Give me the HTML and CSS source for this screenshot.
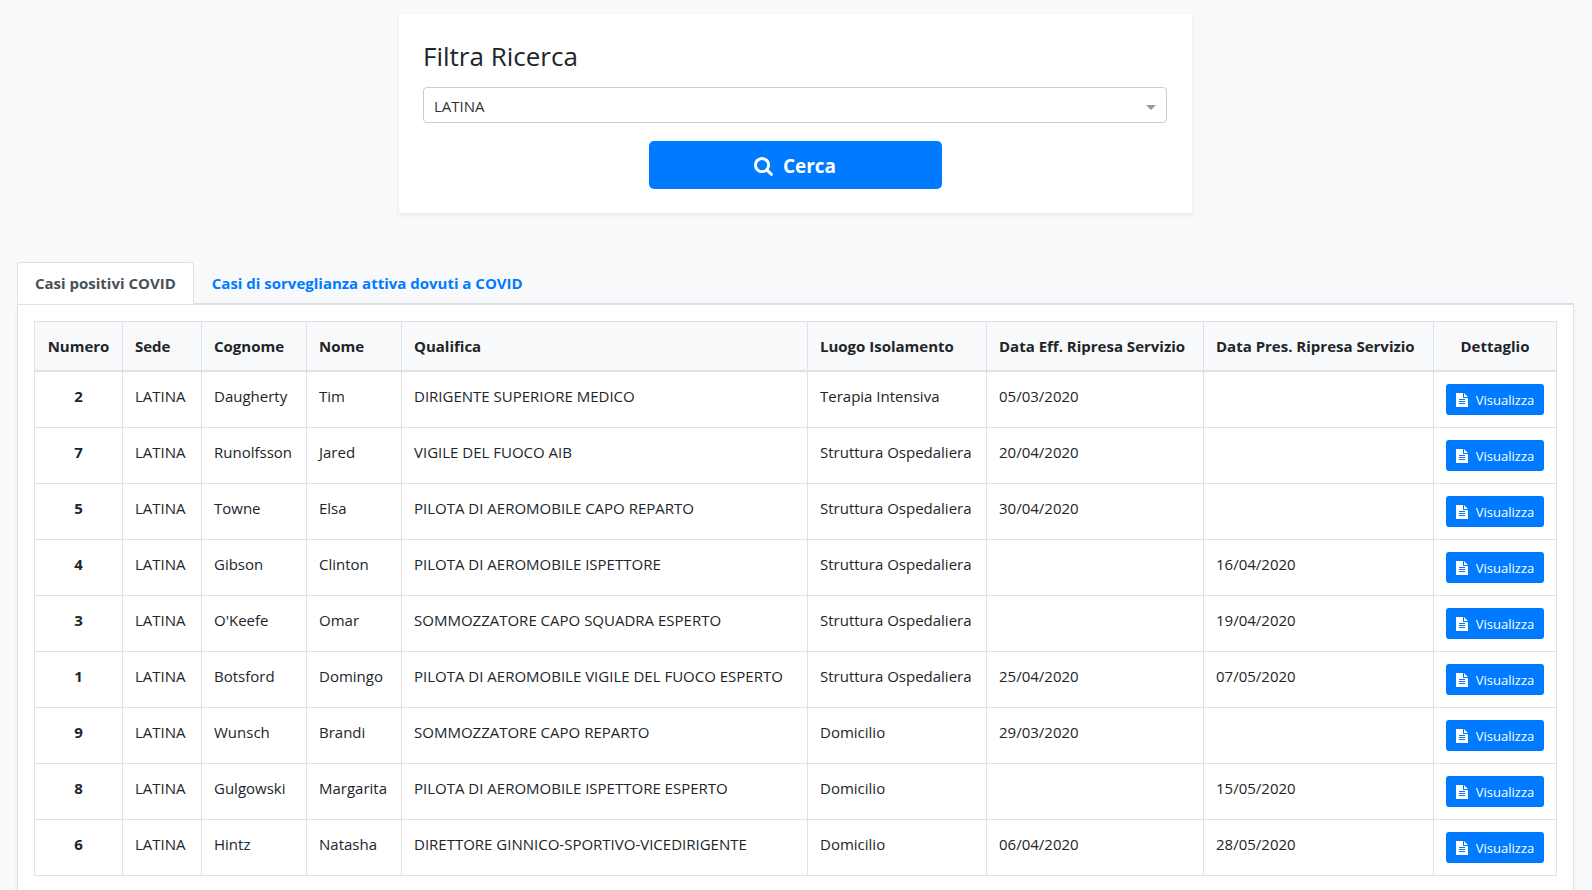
FILE: index.html
```html
<!DOCTYPE html>
<html lang="it">
<head>
<meta charset="utf-8">
<title>Filtra Ricerca</title>
<link rel="stylesheet" href="styles.css">
</head>
<body>
<svg class="sprite" aria-hidden="true">
  <symbol id="icon-search" viewBox="0 0 1664 1664"><path d="M1152 704q0-185-131.500-316.500T704 256 387.500 387.500 256 704t131.500 316.500T704 1152t316.500-131.500T1152 704zm512 832q0 52-38 90t-90 38q-54 0-90-38l-343-342q-179 124-399 124-143 0-273.500-55.500t-225-150-150-225T0 704t55.500-273.500 150-225 225-150T704 0t273.500 55.500 225 150 150 225T1408 704q0 220-124 399l343 343q37 37 37 90z"/></symbol>
  <symbol id="icon-file" viewBox="0 0 12 14"><path fill-rule="evenodd" d="M0 0h7v5h5v9H0zM8 0l4 4H8zM3 6v1h6V6zM3 8v1h6V8zM3 10v1h6v-1z"/></symbol>
</svg>

<form class="filter">
  <h1 class="filter-title"><label for="sede">Filtra Ricerca</label></h1>
  <div class="select">
    <select id="sede" class="select-control"><option>LATINA</option></select>
    <svg class="select-arrow" viewBox="0 0 10 5" aria-hidden="true"><path d="M0 0h10L5 5z"/></svg>
  </div>
  <button type="button" class="btn btn-search"><svg class="icon-search" aria-hidden="true"><use href="#icon-search"/></svg>Cerca</button>
</form>

<main class="cases">
  <nav class="tabs">
    <a class="tab tab-active" href="#positivi">Casi positivi COVID</a>
    <a class="tab" href="#sorveglianza">Casi di sorveglianza attiva dovuti a COVID</a>
  </nav>
  <section class="panel" id="positivi">
    <table class="table">
      <colgroup>
        <col class="col-numero"><col class="col-sede"><col class="col-cognome"><col class="col-nome"><col><col class="col-luogo"><col class="col-eff"><col class="col-pres"><col class="col-dettaglio">
      </colgroup>
      <thead>
        <tr><th class="center">Numero</th><th>Sede</th><th>Cognome</th><th>Nome</th><th>Qualifica</th><th>Luogo Isolamento</th><th>Data Eff. Ripresa Servizio</th><th>Data Pres. Ripresa Servizio</th><th class="center">Dettaglio</th></tr>
      </thead>
      <tbody>
        <tr><th class="center">2</th><td>LATINA</td><td>Daugherty</td><td>Tim</td><td>DIRIGENTE SUPERIORE MEDICO</td><td>Terapia Intensiva</td><td>05/03/2020</td><td></td><td><button type="button" class="btn btn-view"><svg class="icon-file" aria-hidden="true"><use href="#icon-file"/></svg>Visualizza</button></td></tr>
        <tr><th class="center">7</th><td>LATINA</td><td>Runolfsson</td><td>Jared</td><td>VIGILE DEL FUOCO AIB</td><td>Struttura Ospedaliera</td><td>20/04/2020</td><td></td><td><button type="button" class="btn btn-view"><svg class="icon-file" aria-hidden="true"><use href="#icon-file"/></svg>Visualizza</button></td></tr>
        <tr><th class="center">5</th><td>LATINA</td><td>Towne</td><td>Elsa</td><td>PILOTA DI AEROMOBILE CAPO REPARTO</td><td>Struttura Ospedaliera</td><td>30/04/2020</td><td></td><td><button type="button" class="btn btn-view"><svg class="icon-file" aria-hidden="true"><use href="#icon-file"/></svg>Visualizza</button></td></tr>
        <tr><th class="center">4</th><td>LATINA</td><td>Gibson</td><td>Clinton</td><td>PILOTA DI AEROMOBILE ISPETTORE</td><td>Struttura Ospedaliera</td><td></td><td>16/04/2020</td><td><button type="button" class="btn btn-view"><svg class="icon-file" aria-hidden="true"><use href="#icon-file"/></svg>Visualizza</button></td></tr>
        <tr><th class="center">3</th><td>LATINA</td><td>O'Keefe</td><td>Omar</td><td>SOMMOZZATORE CAPO SQUADRA ESPERTO</td><td>Struttura Ospedaliera</td><td></td><td>19/04/2020</td><td><button type="button" class="btn btn-view"><svg class="icon-file" aria-hidden="true"><use href="#icon-file"/></svg>Visualizza</button></td></tr>
        <tr><th class="center">1</th><td>LATINA</td><td>Botsford</td><td>Domingo</td><td>PILOTA DI AEROMOBILE VIGILE DEL FUOCO ESPERTO</td><td>Struttura Ospedaliera</td><td>25/04/2020</td><td>07/05/2020</td><td><button type="button" class="btn btn-view"><svg class="icon-file" aria-hidden="true"><use href="#icon-file"/></svg>Visualizza</button></td></tr>
        <tr><th class="center">9</th><td>LATINA</td><td>Wunsch</td><td>Brandi</td><td>SOMMOZZATORE CAPO REPARTO</td><td>Domicilio</td><td>29/03/2020</td><td></td><td><button type="button" class="btn btn-view"><svg class="icon-file" aria-hidden="true"><use href="#icon-file"/></svg>Visualizza</button></td></tr>
        <tr><th class="center">8</th><td>LATINA</td><td>Gulgowski</td><td>Margarita</td><td>PILOTA DI AEROMOBILE ISPETTORE ESPERTO</td><td>Domicilio</td><td></td><td>15/05/2020</td><td><button type="button" class="btn btn-view"><svg class="icon-file" aria-hidden="true"><use href="#icon-file"/></svg>Visualizza</button></td></tr>
        <tr><th class="center">6</th><td>LATINA</td><td>Hintz</td><td>Natasha</td><td>DIRETTORE GINNICO-SPORTIVO-VICEDIRIGENTE</td><td>Domicilio</td><td>06/04/2020</td><td>28/05/2020</td><td><button type="button" class="btn btn-view"><svg class="icon-file" aria-hidden="true"><use href="#icon-file"/></svg>Visualizza</button></td></tr>
      </tbody>
    </table>
  </section>
</main>
</body>
</html>
```
FILE: styles.css
```css
* { box-sizing: border-box; }

body {
  margin: 0;
  padding: 14px 18px 0 17px;
  background: #f8f9fa;
  color: #212529;
  font: 15px/24px "Open Sans", "Noto Sans", sans-serif;
}

.sprite { display: none; }

.filter {
  display: flex;
  flex-direction: column;
  width: 793px;
  max-width: 100%;
  margin: 0 auto 49px;
  padding: 24px 25px 24px 24px;
  background: #fff;
  box-shadow: 0 2px 4px rgba(0, 0, 0, 0.075);
}

.filter-title {
  margin: 0 0 13px;
  font-size: 26px;
  font-weight: 400;
  line-height: 36px;
}

.select { position: relative; margin-bottom: 18px; }

.select-control {
  display: block;
  width: 100%;
  height: 36px;
  padding: 1px 10px 0;
  border: 1px solid #ccc;
  border-radius: 4px;
  background: #fff;
  color: #333;
  font: inherit;
  appearance: none;
}

.select-arrow {
  position: absolute;
  top: 18px;
  right: 11px;
  width: 10px;
  height: 5px;
  fill: #999;
  pointer-events: none;
}

.btn {
  display: flex;
  align-items: center;
  justify-content: center;
  border: 0;
  background: #007bff;
  color: #fff;
  font-family: inherit;
  cursor: pointer;
}

.btn-search {
  gap: 10px;
  align-self: center;
  width: 293px;
  height: 48px;
  padding: 2px 0 0;
  border-radius: 5px;
  font-size: 19px;
  font-weight: 700;
}

.icon-search { width: 19px; height: 19px; fill: #fff; }

.tabs {
  display: flex;
  border-bottom: 1px solid #dee2e6;
}

.tab {
  margin-bottom: -1px;
  padding: 8px 17px;
  border: 1px solid transparent;
  border-radius: 4px 4px 0 0;
  color: #007bff;
  font-weight: 700;
  text-decoration: none;
}

.tab-active {
  border-color: #dee2e6 #dee2e6 #fff;
  background: #fff;
  color: #495057;
}

.panel {
  padding: 16px;
  border: 1px solid #dee2e6;
  background: #fff;
  box-shadow: 0 2px 4px rgba(0, 0, 0, 0.075);
}

.table {
  width: 100%;
  border-collapse: collapse;
  table-layout: fixed;
}

.table th,
.table td {
  padding: 12px;
  border: 1px solid #dee2e6;
  text-align: left;
  vertical-align: top;
  white-space: nowrap;
}

.table thead th {
  border-bottom-width: 2px;
  background: #f8f9fa;
}

.table .center { text-align: center; }

.col-numero { width: 88px; }
.col-sede { width: 79px; }
.col-cognome { width: 105px; }
.col-nome { width: 95px; }
.col-luogo { width: 179px; }
.col-eff { width: 217px; }
.col-pres { width: 230px; }
.col-dettaglio { width: 123px; }

.btn-view {
  gap: 8px;
  width: 100%;
  height: 31px;
  padding: 0;
  border-radius: 3px;
  font-size: 13px;
}

.icon-file { width: 12px; height: 14px; fill: #fff; }
```
